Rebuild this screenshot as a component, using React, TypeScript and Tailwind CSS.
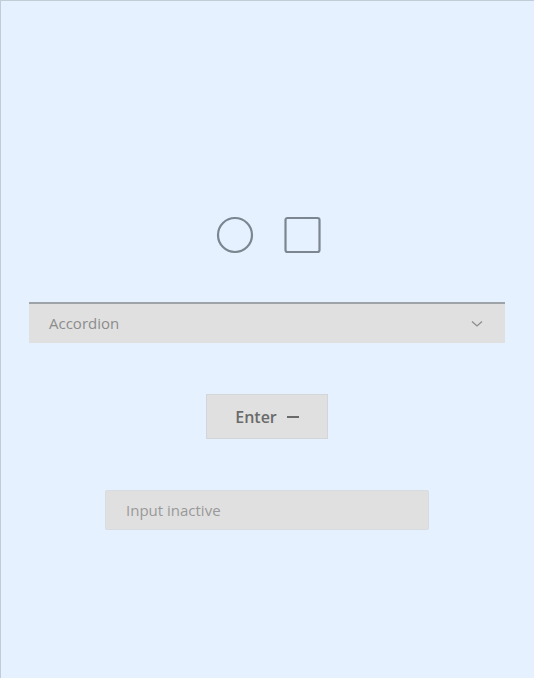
import React from "react";

export default function App() {
  return (
    <div
      className="w-[534px] h-[678px] bg-[#e5f1fe] border-l border-t border-[#c2ccd6] flex flex-col items-center"
      style={{ fontFamily: '"Open Sans", "Noto Sans", sans-serif' }}
    >
      <div className="mt-[215px] flex items-center gap-[30px] ml-[1px]">
        <svg width="38" height="38" viewBox="0 0 38 38">
          <circle cx="19" cy="19" r="17" fill="none" stroke="#7b8691" strokeWidth="2.2" />
        </svg>
        <svg width="37" height="38" viewBox="0 0 37 38">
          <rect x="1.5" y="2" width="34" height="34" rx="2" fill="none" stroke="#7b8691" strokeWidth="2.2" />
        </svg>
      </div>

      <div className="mt-[48px] w-[476px] h-[41px] ml-[-1px] bg-[#e0e0e0] border-t-2 border-[#9ea3a8] flex items-center justify-between pl-[20px] pr-[22px]">
        <span className="text-[15px] text-[#8c8c8c]">Accordion</span>
        <svg width="12" height="8" viewBox="0 0 12 8">
          <path d="M1 1.5 L6 6 L11 1.5" fill="none" stroke="#8c8c8c" strokeWidth="1.3" />
        </svg>
      </div>

      <div className="mt-[51px] w-[122px] h-[45px] ml-[-1px] bg-[#e0e0e0] border border-[#d2d6da] flex items-center justify-center gap-[10px]">
        <span className="text-[16px] font-semibold text-[#6a6a6a]">Enter</span>
        <span className="w-[12px] h-[2px] bg-[#6a6a6a] mt-[1px]"></span>
      </div>

      <div className="mt-[51px] w-[324px] h-[40px] ml-[-1px] bg-[#e0e0e0] border border-[#d6dce2] rounded-[2px] flex items-center pl-[20px]">
        <span className="text-[15px] text-[#999999]">Input inactive</span>
      </div>
    </div>
  );
}
